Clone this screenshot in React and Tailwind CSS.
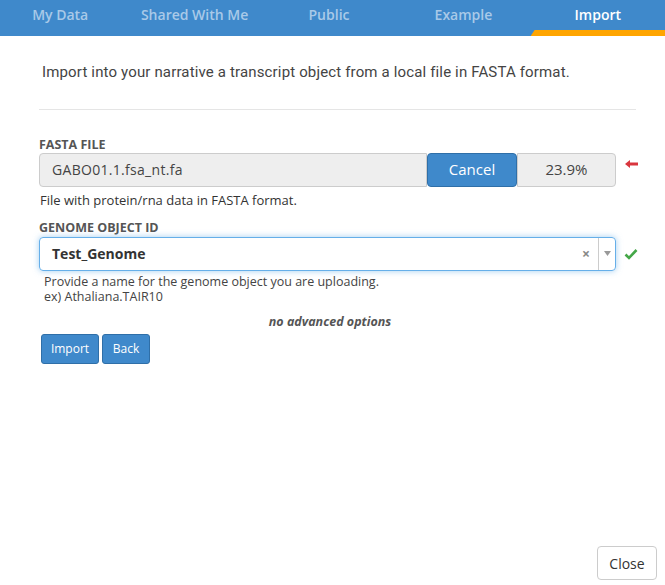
export default function App() {
  const tabs = ['My Data', 'Shared With Me', 'Public', 'Example', 'Import'];

  return (
    <div className="relative w-[665px] h-[585px] bg-white overflow-hidden font-['Open_Sans',sans-serif] text-[#333]">
      {/* Tab bar */}
      <div className="h-[36px] bg-[#3f89cb] overflow-hidden">
        <div className="flex h-full w-[672px] -ml-[7px]">
          {tabs.map((t, i) => {
            const active = i === tabs.length - 1;
            return (
              <div key={t} className="relative flex-1 flex items-start justify-center pt-[4px]">
                <span className={`text-[14px] font-semibold ${active ? 'text-white' : 'text-[#a9c9e8]'}`}>{t}</span>
                {active && (
                  <div className="absolute left-0 right-0 bottom-0 h-[6px] bg-[#ffa500] [clip-path:polygon(4px_0,100%_0,100%_100%,0_100%)]" />
                )}
              </div>
            );
          })}
        </div>
      </div>

      <div className="px-[39px]">
        <p className="pt-[25px] pl-[3px] text-[15px] tracking-[0.15px] text-[#444] font-['Roboto',sans-serif]">
          Import into your narrative a transcript object from a local file in FASTA format.
        </p>
        <div className="mt-[25px] w-[597px] border-t border-[#e5e5e5]" />

        {/* FASTA file */}
        <div className="mt-[27px] text-[12.5px] font-bold text-[#555] leading-[16px]">FASTA FILE</div>
        <div className="flex items-center w-[610px]">
          <div className="flex shrink-0 w-[577px] h-[34px]">
            <div className="flex-1 flex items-center pl-[12px] bg-[#eee] border border-[#ccc] rounded-l-[4px] text-[14px] text-[#444] tracking-[0.3px]">
              GABO01.1.fsa_nt.fa
            </div>
            <div className="w-[90px] flex items-center justify-center bg-[#3f89cb] border border-[#2f6fa8] rounded-[4px] text-white text-[15px]">
              Cancel
            </div>
            <div className="w-[99px] flex items-center justify-center bg-[#eee] border border-[#ccc] rounded-r-[4px] text-[15px] text-[#444]">
              23.9%
            </div>
          </div>
          <svg width="14" height="10" viewBox="0 0 14 10" className="shrink-0 ml-[9px] -mt-[12px]">
            <path d="M0 5 L5 1 L5 3.5 L13 3.5 L13 6.5 L5 6.5 L5 9 Z" fill="#d9363e" />
          </svg>
        </div>
        <div className="mt-[5px] pl-[1px] text-[13px] text-[#333] leading-[16px]">File with protein/rna data in FASTA format.</div>

        {/* Genome object id */}
        <div className="mt-[12px] text-[12.5px] font-bold text-[#555] leading-[16px]">GENOME OBJECT ID</div>
        <div className="flex items-center mt-[1px] w-[610px]">
          <div className="flex shrink-0 items-center w-[577px] h-[34px] border border-[#66afe9] rounded-[4px] shadow-[0_0_6px_rgba(102,175,233,0.6)]">
            <div className="flex-1 pl-[12px] text-[14px] font-bold text-[#333]">Test_Genome</div>
            <span className="text-[14px] font-bold text-[#888] mr-[8px]">×</span>
            <div className="h-full border-l border-[#ccc] w-[17px] flex items-center justify-center">
              <svg width="7" height="5" viewBox="0 0 7 5"><path d="M0 0 L7 0 L3.5 5 Z" fill="#999" /></svg>
            </div>
          </div>
          <svg width="14" height="12" viewBox="0 0 14 12" className="shrink-0 ml-[8px]">
            <path d="M1.5 6.5 L5 10 L12.5 2" stroke="#44a748" strokeWidth="2.6" fill="none" />
          </svg>
        </div>
        <div className="mt-[3px] pl-[5px] text-[12.5px] text-[#444]">
          <div className="leading-[15px]">Provide a name for the genome object you are uploading.</div>
          <div className="leading-[15px]">ex) Athaliana.TAIR10</div>
        </div>

        <div className="mt-[9px] w-[582px] text-center text-[12.5px] italic font-bold text-[#555]">no advanced options</div>

        <div className="flex gap-[3px] mt-[3px] pl-[2px]">
          <div className="w-[58px] h-[30px] flex items-center justify-center bg-[#3f89cb] border border-[#2f6fa8] rounded-[3px] text-white text-[12px]">Import</div>
          <div className="w-[48px] h-[30px] flex items-center justify-center bg-[#3f89cb] border border-[#2f6fa8] rounded-[3px] text-white text-[12px]">Back</div>
        </div>
      </div>

      <div className="absolute right-[8px] bottom-[5px] w-[60px] h-[34px] flex items-center justify-center border border-[#ccc] rounded-[4px] bg-white text-[14px] text-[#333]">
        Close
      </div>
    </div>
  );
}
